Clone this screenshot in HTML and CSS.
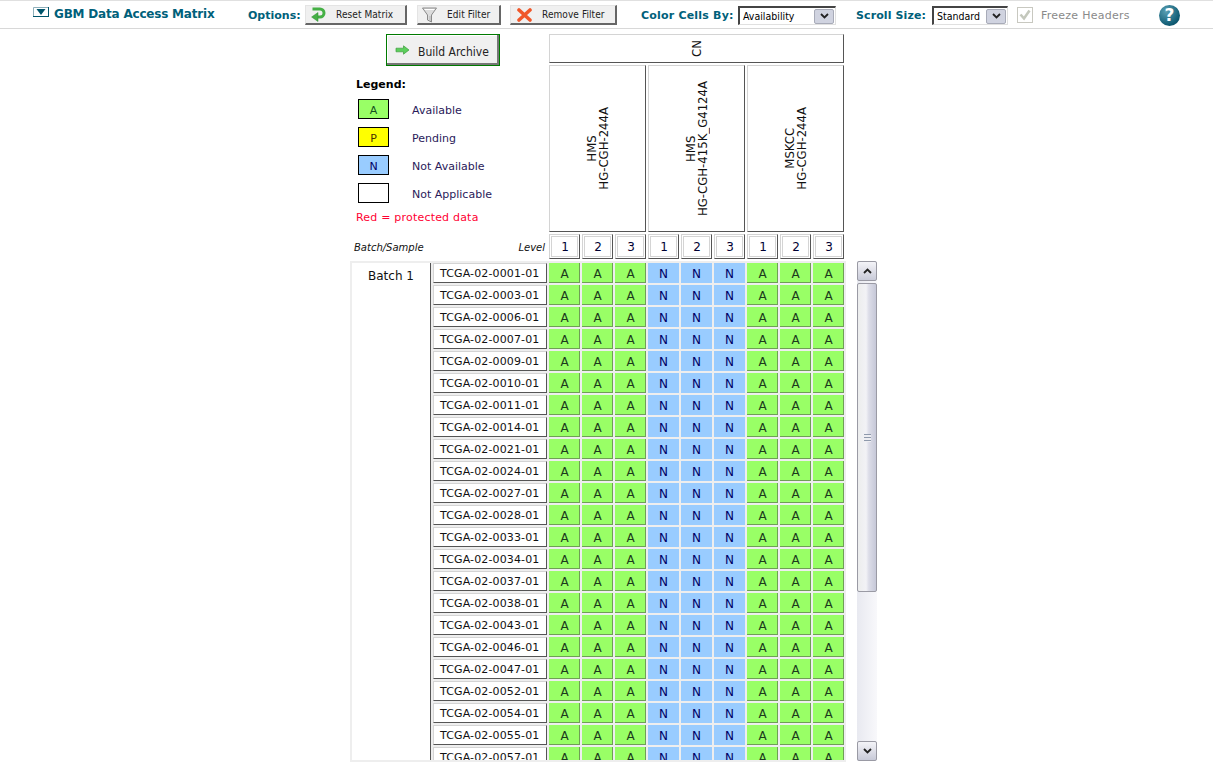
FILE: index.html
```html
<!DOCTYPE html>
<html lang="en">
<head>
    <meta charset="UTF-8">
    <title>GBM Data Access Matrix</title>
    <link rel="stylesheet" href="styles.css">
</head>
<body>

<div class="toolbar">
    <span class="collapse-icon"><svg width="16" height="10" viewBox="0 0 16 10"><path d="M.5 9.500V.5h15" fill="none" stroke="#8fb0bb"/><path d="M15.500 0v10M0 9.500h16" stroke="#00546b"/><path d="M3.500 2h9L8 8z" fill="#00546b"/></svg></span>
    <span class="title">GBM Data Access Matrix</span>
    <span class="opt-label options-label">Options:</span>
    <button class="btn btn-reset">
        <svg width="15" height="15" viewBox="0 0 15 15"><path d="M1.500 2h7.500a4 4 0 0 1 0 8H6" fill="none" stroke="#45b045" stroke-width="3"/><path d="M7 5.500v9L.6 10z" fill="#45b045" stroke="#2f8a2f" stroke-width=".5"/></svg>
        Reset Matrix
    </button>
    <button class="btn btn-edit">
        <svg width="15" height="16" viewBox="0 0 15 16"><path d="M.5 1h14l-5 7v7l-4-2V8z" fill="#dcdcdc" stroke="#8a8a8a"/><path d="M2.500 2.500h10" stroke="#ffffff"/><path d="M8 9v5" stroke="#b4b4b4"/></svg>
        Edit Filter
    </button>
    <button class="btn btn-remove">
        <svg width="15" height="14" viewBox="0 0 15 14"><path d="M2 2l11 10M13 2L2 12" stroke="#f0572a" stroke-width="3.600" stroke-linecap="round"/></svg>
        Remove Filter
    </button>
    <span class="opt-label color-label">Color Cells By:</span>
    <div class="fake-select select-color"><span>Availability</span><i class="select-arrow"><svg width="9" height="6" viewBox="0 0 9 6"><path d="M1 1l3.500 3.500L8 1" fill="none" stroke="#222" stroke-width="1.800"/></svg></i></div>
    <span class="opt-label scroll-label">Scroll Size:</span>
    <div class="fake-select select-scroll"><span>Standard</span><i class="select-arrow"><svg width="9" height="6" viewBox="0 0 9 6"><path d="M1 1l3.500 3.500L8 1" fill="none" stroke="#222" stroke-width="1.800"/></svg></i></div>
    <span class="check-box"><svg width="12" height="12" viewBox="0 0 12 12"><path d="M1.500 5.500l3.500 4 5.500-8" fill="none" stroke="#c4c8bc" stroke-width="2.600"/></svg></span>
    <span class="freeze-label">Freeze Headers</span>
    <span class="help-icon">?</span>
</div>

<div class="matrix">
    <div class="matrix-head">
        <div class="head-side">
            <button class="build-btn">
                <svg width="15" height="10" viewBox="0 0 15 10"><path d="M1 3.200h7.500V.800L14 5 8.500 9.200V6.800H1z" fill="#5ccf5c" stroke="#3d9c3d" stroke-width=".7"/></svg>
                <span>Build Archive</span>
            </button>
            <div class="legend">
                <div class="legend-title">Legend:</div>
                <div class="legend-row"><span class="swatch green">A</span><span class="legend-text">Available</span></div>
                <div class="legend-row"><span class="swatch yellow">P</span><span class="legend-text">Pending</span></div>
                <div class="legend-row"><span class="swatch blue">N</span><span class="legend-text">Not Available</span></div>
                <div class="legend-row"><span class="swatch"></span><span class="legend-text">Not Applicable</span></div>
                <div class="legend-red">Red = protected data</div>
            </div>
            <div class="axis-labels"><span>Batch/Sample</span><span>Level</span></div>
        </div>
        <div class="col-heads">
            <div class="head-box head-cn"><span class="vtext">CN</span></div>
            <div class="head-centers">
                <div class="head-box"><span class="vtext">HMS<br>HG-CGH-244A</span></div>
                <div class="head-box"><span class="vtext">HMS<br>HG-CGH-415K_G4124A</span></div>
                <div class="head-box"><span class="vtext">MSKCC<br>HG-CGH-244A</span></div>
            </div>
            <div class="head-levels">
                <div class="level">1</div><div class="level">2</div><div class="level">3</div>
                <div class="level">1</div><div class="level">2</div><div class="level">3</div>
                <div class="level">1</div><div class="level">2</div><div class="level">3</div>
            </div>
        </div>
    </div>

    <div class="matrix-body">
        <div class="grid-frame">
            <div class="batch">Batch 1</div>
            <div class="rows">
                <div class="row"><div class="sample">TCGA-02-0001-01</div><div class="cell a">A</div><div class="cell a">A</div><div class="cell a">A</div><div class="cell n">N</div><div class="cell n">N</div><div class="cell n">N</div><div class="cell a">A</div><div class="cell a">A</div><div class="cell a">A</div></div>
                <div class="row"><div class="sample">TCGA-02-0003-01</div><div class="cell a">A</div><div class="cell a">A</div><div class="cell a">A</div><div class="cell n">N</div><div class="cell n">N</div><div class="cell n">N</div><div class="cell a">A</div><div class="cell a">A</div><div class="cell a">A</div></div>
                <div class="row"><div class="sample">TCGA-02-0006-01</div><div class="cell a">A</div><div class="cell a">A</div><div class="cell a">A</div><div class="cell n">N</div><div class="cell n">N</div><div class="cell n">N</div><div class="cell a">A</div><div class="cell a">A</div><div class="cell a">A</div></div>
                <div class="row"><div class="sample">TCGA-02-0007-01</div><div class="cell a">A</div><div class="cell a">A</div><div class="cell a">A</div><div class="cell n">N</div><div class="cell n">N</div><div class="cell n">N</div><div class="cell a">A</div><div class="cell a">A</div><div class="cell a">A</div></div>
                <div class="row"><div class="sample">TCGA-02-0009-01</div><div class="cell a">A</div><div class="cell a">A</div><div class="cell a">A</div><div class="cell n">N</div><div class="cell n">N</div><div class="cell n">N</div><div class="cell a">A</div><div class="cell a">A</div><div class="cell a">A</div></div>
                <div class="row"><div class="sample">TCGA-02-0010-01</div><div class="cell a">A</div><div class="cell a">A</div><div class="cell a">A</div><div class="cell n">N</div><div class="cell n">N</div><div class="cell n">N</div><div class="cell a">A</div><div class="cell a">A</div><div class="cell a">A</div></div>
                <div class="row"><div class="sample">TCGA-02-0011-01</div><div class="cell a">A</div><div class="cell a">A</div><div class="cell a">A</div><div class="cell n">N</div><div class="cell n">N</div><div class="cell n">N</div><div class="cell a">A</div><div class="cell a">A</div><div class="cell a">A</div></div>
                <div class="row"><div class="sample">TCGA-02-0014-01</div><div class="cell a">A</div><div class="cell a">A</div><div class="cell a">A</div><div class="cell n">N</div><div class="cell n">N</div><div class="cell n">N</div><div class="cell a">A</div><div class="cell a">A</div><div class="cell a">A</div></div>
                <div class="row"><div class="sample">TCGA-02-0021-01</div><div class="cell a">A</div><div class="cell a">A</div><div class="cell a">A</div><div class="cell n">N</div><div class="cell n">N</div><div class="cell n">N</div><div class="cell a">A</div><div class="cell a">A</div><div class="cell a">A</div></div>
                <div class="row"><div class="sample">TCGA-02-0024-01</div><div class="cell a">A</div><div class="cell a">A</div><div class="cell a">A</div><div class="cell n">N</div><div class="cell n">N</div><div class="cell n">N</div><div class="cell a">A</div><div class="cell a">A</div><div class="cell a">A</div></div>
                <div class="row"><div class="sample">TCGA-02-0027-01</div><div class="cell a">A</div><div class="cell a">A</div><div class="cell a">A</div><div class="cell n">N</div><div class="cell n">N</div><div class="cell n">N</div><div class="cell a">A</div><div class="cell a">A</div><div class="cell a">A</div></div>
                <div class="row"><div class="sample">TCGA-02-0028-01</div><div class="cell a">A</div><div class="cell a">A</div><div class="cell a">A</div><div class="cell n">N</div><div class="cell n">N</div><div class="cell n">N</div><div class="cell a">A</div><div class="cell a">A</div><div class="cell a">A</div></div>
                <div class="row"><div class="sample">TCGA-02-0033-01</div><div class="cell a">A</div><div class="cell a">A</div><div class="cell a">A</div><div class="cell n">N</div><div class="cell n">N</div><div class="cell n">N</div><div class="cell a">A</div><div class="cell a">A</div><div class="cell a">A</div></div>
                <div class="row"><div class="sample">TCGA-02-0034-01</div><div class="cell a">A</div><div class="cell a">A</div><div class="cell a">A</div><div class="cell n">N</div><div class="cell n">N</div><div class="cell n">N</div><div class="cell a">A</div><div class="cell a">A</div><div class="cell a">A</div></div>
                <div class="row"><div class="sample">TCGA-02-0037-01</div><div class="cell a">A</div><div class="cell a">A</div><div class="cell a">A</div><div class="cell n">N</div><div class="cell n">N</div><div class="cell n">N</div><div class="cell a">A</div><div class="cell a">A</div><div class="cell a">A</div></div>
                <div class="row"><div class="sample">TCGA-02-0038-01</div><div class="cell a">A</div><div class="cell a">A</div><div class="cell a">A</div><div class="cell n">N</div><div class="cell n">N</div><div class="cell n">N</div><div class="cell a">A</div><div class="cell a">A</div><div class="cell a">A</div></div>
                <div class="row"><div class="sample">TCGA-02-0043-01</div><div class="cell a">A</div><div class="cell a">A</div><div class="cell a">A</div><div class="cell n">N</div><div class="cell n">N</div><div class="cell n">N</div><div class="cell a">A</div><div class="cell a">A</div><div class="cell a">A</div></div>
                <div class="row"><div class="sample">TCGA-02-0046-01</div><div class="cell a">A</div><div class="cell a">A</div><div class="cell a">A</div><div class="cell n">N</div><div class="cell n">N</div><div class="cell n">N</div><div class="cell a">A</div><div class="cell a">A</div><div class="cell a">A</div></div>
                <div class="row"><div class="sample">TCGA-02-0047-01</div><div class="cell a">A</div><div class="cell a">A</div><div class="cell a">A</div><div class="cell n">N</div><div class="cell n">N</div><div class="cell n">N</div><div class="cell a">A</div><div class="cell a">A</div><div class="cell a">A</div></div>
                <div class="row"><div class="sample">TCGA-02-0052-01</div><div class="cell a">A</div><div class="cell a">A</div><div class="cell a">A</div><div class="cell n">N</div><div class="cell n">N</div><div class="cell n">N</div><div class="cell a">A</div><div class="cell a">A</div><div class="cell a">A</div></div>
                <div class="row"><div class="sample">TCGA-02-0054-01</div><div class="cell a">A</div><div class="cell a">A</div><div class="cell a">A</div><div class="cell n">N</div><div class="cell n">N</div><div class="cell n">N</div><div class="cell a">A</div><div class="cell a">A</div><div class="cell a">A</div></div>
                <div class="row"><div class="sample">TCGA-02-0055-01</div><div class="cell a">A</div><div class="cell a">A</div><div class="cell a">A</div><div class="cell n">N</div><div class="cell n">N</div><div class="cell n">N</div><div class="cell a">A</div><div class="cell a">A</div><div class="cell a">A</div></div>
                <div class="row"><div class="sample">TCGA-02-0057-01</div><div class="cell a">A</div><div class="cell a">A</div><div class="cell a">A</div><div class="cell n">N</div><div class="cell n">N</div><div class="cell n">N</div><div class="cell a">A</div><div class="cell a">A</div><div class="cell a">A</div></div>
            </div>
        </div>

        <div class="scrollbar">
            <div class="scroll-btn"><svg width="9" height="6" viewBox="0 0 9 6"><path d="M1 5l3.500-3.500L8 5" fill="none" stroke="#222" stroke-width="1.800"/></svg></div>
            <div class="scroll-track">
                <div class="scroll-thumb"><span class="grip"></span></div>
            </div>
            <div class="scroll-btn"><svg width="9" height="6" viewBox="0 0 9 6"><path d="M1 1l3.500 3.500L8 1" fill="none" stroke="#222" stroke-width="1.800"/></svg></div>
        </div>
    </div>
</div>

</body>
</html>
```

FILE: styles.css
```css
:root {
    --teal: #00607a;
    --border-light: #d4d4d4;
    --border-dark: #555555;
    --cell-green: #99ff66;
    --cell-blue: #99ccff;
    --frame: #eeeeee;
}

body {
    margin: 0;
    height: 765px;
    overflow: hidden;
    background: #ffffff;
    color: #111111;
    font-family: "DejaVu Sans", Verdana, sans-serif;
    font-size: 11px;
}

/* top options bar */
.toolbar {
    display: flex;
    align-items: center;
    box-sizing: border-box;
    height: 29px;
    padding: 1px 0 0 33px;
    border-top: 1px solid #e0e0e0;
    border-bottom: 1px solid #d8d8d8;
}

.collapse-icon {
    display: flex;
    margin-top: -6px;
}

.title {
    margin-left: 5px;
    margin-top: -3px;
    width: 160px;
    color: var(--teal);
    font-size: 12px;
    font-weight: bold;
    letter-spacing: -0.2px;
    white-space: nowrap;
}

.opt-label {
    color: var(--teal);
    font-size: 11px;
    font-weight: bold;
    white-space: nowrap;
}

.options-label { margin-left: 34px; width: 57px; }
.color-label { margin-left: 24px; width: 97px; letter-spacing: 0.2px; }
.scroll-label { margin-left: 20px; width: 76px; letter-spacing: 0.1px; }

.btn {
    display: flex;
    align-items: center;
    gap: 10px;
    box-sizing: border-box;
    height: 20px;
    padding: 0;
    background: #f0f0f0;
    border: 1px solid;
    border-width: 1px 2px 2px 1px;
    border-color: #e4e4e4 #666666 #666666 #e4e4e4;
    font-family: "DejaVu Sans Condensed", Tahoma, sans-serif;
    font-size: 10px;
    letter-spacing: 0.08px;
    color: #222222;
    white-space: nowrap;
}

.btn-reset { width: 102px; padding-left: 5px; }
.btn-edit { width: 84px; margin-left: 10px; padding-left: 4px; }
.btn-remove { width: 107px; margin-left: 9px; padding-left: 6px; }

.fake-select {
    display: flex;
    align-items: center;
    justify-content: space-between;
    box-sizing: border-box;
    height: 19px;
    margin-top: 1px;
    padding: 0 1px 0 3px;
    background: #ffffff;
    border: 1px solid;
    border-width: 2px 1px 1px 2px;
    border-color: #444444 #e0e0e0 #e0e0e0 #444444;
    font-family: "DejaVu Sans Condensed", Tahoma, sans-serif;
    font-size: 10.5px;
    color: #000000;
}

.select-color { width: 98px; }
.select-scroll { width: 76px; }

.select-arrow {
    display: flex;
    align-items: center;
    justify-content: center;
    box-sizing: border-box;
    width: 20px;
    height: 15px;
    background: #d0d3e0;
    border: 1px solid #a8abb8;
    border-radius: 2px;
}

.check-box {
    display: flex;
    align-items: center;
    justify-content: center;
    box-sizing: border-box;
    width: 16px;
    height: 16px;
    margin-left: 9px;
    border: 1px solid #c8c8c0;
}

.freeze-label {
    width: 89px;
    margin-left: 8px;
    color: #8a8a8a;
    font-size: 11px;
    letter-spacing: 0.25px;
    white-space: nowrap;
}

.help-icon {
    display: flex;
    align-items: center;
    justify-content: center;
    width: 21px;
    height: 21px;
    margin-left: 29px;
    border-radius: 50%;
    background: radial-gradient(circle at 35% 30%, #5aa0b4, #0e5a72 70%, #1c4250);
    color: #ffffff;
    font-size: 17px;
    font-weight: bold;
}

/* matrix */
.matrix {
    padding: 5px 0 0 350px;
}

.matrix-head {
    display: flex;
    height: 227px;
}

.head-side {
    position: relative;
    width: 199px;
}

.build-btn {
    display: flex;
    align-items: center;
    gap: 8px;
    box-sizing: border-box;
    width: 114px;
    height: 32px;
    margin-left: 36px;
    padding: 0 0 0 8px;
    background: #f0f0f0;
    border: 1px solid #007a00;
    box-shadow: inset -2px -2px 0 #777777, inset 1px 1px 0 #ffffff;
    font-family: "DejaVu Sans Condensed", Tahoma, sans-serif;
    font-size: 12px;
    color: #222222;
}

.build-btn span {
    padding-top: 4px;
}

.legend {
    padding: 11px 0 0 6px;
}

.legend-title {
    height: 15px;
    font-weight: bold;
    font-size: 11px;
    line-height: 15px;
    color: #000000;
    margin-bottom: 7px;
}

.legend-row {
    display: flex;
    align-items: center;
    height: 20px;
    margin-bottom: 8px;
    color: #2a1a5a;
}

.legend-text {
    padding-top: 2px;
}

.swatch {
    display: flex;
    align-items: center;
    justify-content: center;
    box-sizing: border-box;
    width: 31px;
    height: 20px;
    margin: 0 23px 0 2px;
    padding-top: 2px;
    border: 1px solid #000000;
    font-size: 11px;
}

.swatch.green { background: var(--cell-green); color: #14501e; }
.swatch.yellow { background: #ffff00; color: #4a3000; }
.swatch.blue { background: var(--cell-blue); color: #000066; }

.legend-red {
    color: #ff0033;
    margin-top: 4px;
    letter-spacing: 0.2px;
}

.axis-labels {
    position: absolute;
    left: 4px;
    right: 4px;
    bottom: 8px;
    display: flex;
    justify-content: space-between;
    font-size: 10px;
    font-style: italic;
}

.col-heads {
    display: flex;
    flex-direction: column;
    gap: 2px;
    width: 295px;
}

.head-box {
    display: flex;
    align-items: center;
    justify-content: center;
    flex: 1;
    box-sizing: border-box;
    border: 1px solid;
    border-color: var(--border-light) var(--border-dark) var(--border-dark) var(--border-light);
    font-family: "DejaVu Sans Condensed", Tahoma, sans-serif;
    font-size: 13px;
    line-height: 12px;
    text-align: center;
    white-space: nowrap;
}

.head-cn {
    flex: none;
    height: 29px;
}

.vtext {
    writing-mode: vertical-rl;
    transform: rotate(180deg);
}

.head-centers {
    display: flex;
    gap: 2px;
    height: 167px;
}

.head-levels {
    display: flex;
    gap: 2px;
    height: 25px;
}

.level {
    display: flex;
    align-items: center;
    justify-content: center;
    box-sizing: border-box;
    width: 31px;
    padding-left: 1px;
    border: 1px solid;
    border-color: var(--border-light) var(--border-dark) var(--border-dark) var(--border-light);
    box-shadow: inset 0 0 0 1px #ffffff, inset 0 0 0 2px var(--border-light);
    font-size: 12px;
    color: #000033;
}

.matrix-body {
    display: flex;
    align-items: flex-start;
}

.grid-frame {
    display: flex;
    gap: 2px;
    box-sizing: border-box;
    width: 496px;
    height: 501px;
    padding: 2px 2px 0;
    overflow: hidden;
    background: var(--frame);
    border-bottom: 2px solid var(--frame);
}

.batch {
    box-sizing: border-box;
    width: 79px;
    padding-top: 4px;
    background: #ffffff;
    border-right: 1px solid var(--border-dark);
    font-size: 12px;
    line-height: 18px;
    text-align: center;
}

.rows {
    display: flex;
    flex-direction: column;
    gap: 2px;
}

.row {
    display: flex;
    gap: 2px;
    height: 20px;
}

.sample {
    box-sizing: border-box;
    width: 114px;
    padding-left: 6px;
    background: #ffffff;
    border: 1px solid;
    border-color: var(--border-light) var(--border-dark) var(--border-dark) var(--border-light);
    font-size: 11px;
    letter-spacing: 0.13px;
    line-height: 19px;
    white-space: nowrap;
}

.cell {
    box-sizing: border-box;
    width: 31px;
    font-size: 12px;
    line-height: 22px;
    text-align: center;
}

.cell.a {
    padding-left: 1px;
    background: var(--cell-green);
    border-right: 1px solid #6f9f55;
    border-bottom: 1px solid #6f9f55;
    color: #1c3a1c;
}

.cell.n {
    background: var(--cell-blue);
    color: #000066;
}

/* hand drawn scrollbar, the grid beside it is clipped */
.scrollbar {
    display: flex;
    flex-direction: column;
    box-sizing: border-box;
    width: 20px;
    height: 500px;
    margin-left: 11px;
    background: linear-gradient(90deg, #e8e9f0, #f8f8fb);
}

.scroll-btn {
    display: flex;
    align-items: center;
    justify-content: center;
    flex: none;
    box-sizing: border-box;
    height: 20px;
    background: linear-gradient(#f4f4f8, #c8cad8);
    border: 1px solid #9a9aa4;
    border-radius: 2px;
}

.scroll-track {
    flex: 1;
    padding-top: 2px;
}

.scroll-thumb {
    display: flex;
    align-items: center;
    justify-content: center;
    box-sizing: border-box;
    height: 309px;
    background: linear-gradient(90deg, #eceded, #f2f2f6 45%, #dcdde8 60%, #c6c8d8);
    border: 1px solid #9a9aa4;
    border-radius: 2px;
}

.grip {
    width: 7px;
    height: 8px;
    background: repeating-linear-gradient(#8f9aac 0 1px, #eeeef2 1px 3px);
}
```
